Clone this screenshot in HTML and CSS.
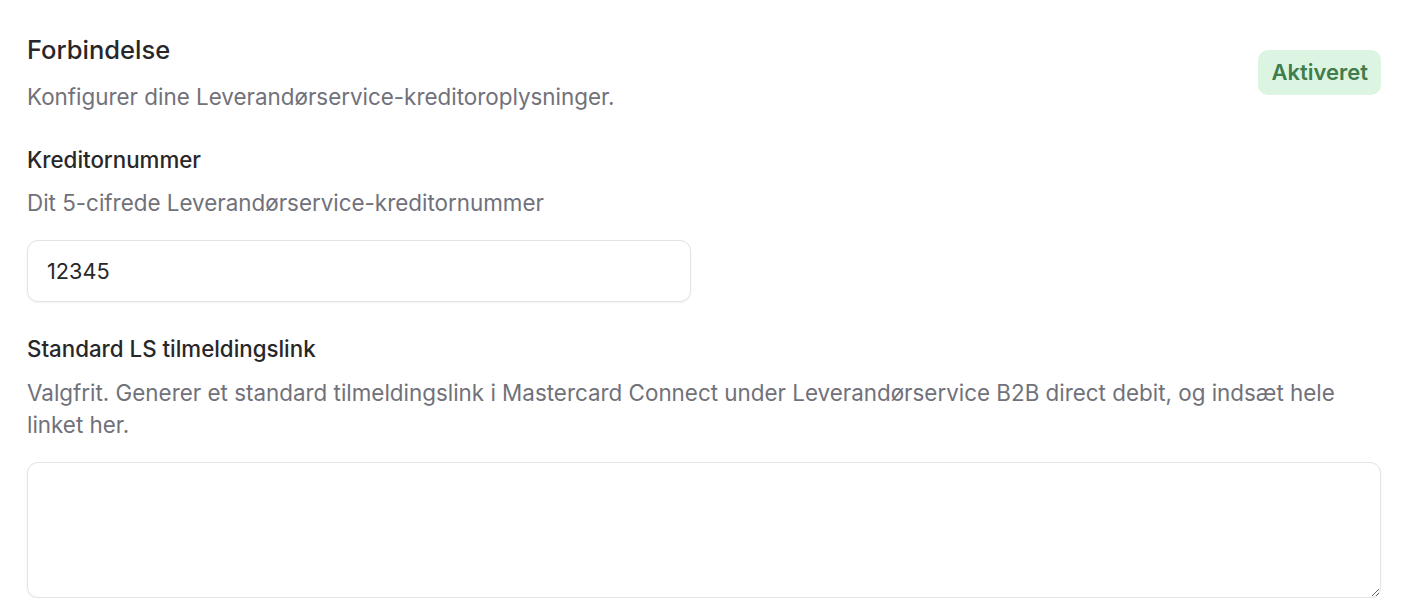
FILE: index.html
```html
<!DOCTYPE html>
<html lang="da">
<head>
<meta charset="utf-8">
<title>Forbindelse</title>
<link rel="stylesheet" href="styles.css">
</head>
<body>
<main class="panel">
  <header class="header">
    <div class="header-text">
      <h2 class="title">Forbindelse</h2>
      <p class="desc">Konfigurer dine Leverandørservice-kreditoroplysninger.</p>
    </div>
    <span class="badge">Aktiveret</span>
  </header>
  <div class="fields">
    <div class="field">
      <label class="label" for="kred">Kreditornummer</label>
      <p class="help">Dit 5-cifrede Leverandørservice-kreditornummer</p>
      <input id="kred" class="input" type="text" value="12345">
    </div>
    <div class="field">
      <label class="label" for="link">Standard LS tilmeldingslink</label>
      <p class="help">Valgfrit. Generer et standard tilmeldingslink i Mastercard Connect under Leverandørservice B2B direct debit, og indsæt hele linket her.</p>
      <textarea id="link" class="textarea"></textarea>
    </div>
  </div>
</main>
</body>
</html>
```
FILE: styles.css
```css
* { box-sizing: border-box; }
html, body { margin: 0; background: #ffffff; }
body {
  font-family: Inter, "Noto Sans", "Liberation Sans", sans-serif;
  color: #27272a;
}
.panel {
  padding: 32px 23px 0 27px;
}
.header {
  display: flex;
  justify-content: space-between;
  align-items: center;
  margin-bottom: 31px;
}
.header-text {
  display: flex;
  flex-direction: column;
  gap: 14px;
}
.title {
  margin: 0;
  font-size: 25.5px;
  line-height: 35px;
  font-weight: 500;
  color: #27272a;
}
.desc {
  margin: 0;
  font-size: 22.4px;
  line-height: 32.5px;
  color: #71717a;
}
.badge {
  display: inline-block;
  padding: 0 13px;
  height: 45px;
  line-height: 45px;
  border-radius: 10px;
  background: #dcf5e3;
  color: #3f7d4c;
  font-size: 22px;
  font-weight: 600;
}
.fields {
  display: flex;
  flex-direction: column;
  gap: 32px;
}
.field {
  display: flex;
  flex-direction: column;
}
.label {
  font-size: 22.3px;
  line-height: 30px;
  font-weight: 500;
  color: #27272a;
  margin-bottom: 12.75px;
}
.help {
  margin: 0 0 20px;
  font-size: 22.4px;
  line-height: 32.5px;
  color: #71717a;
}
.input,
.textarea {
  font-family: inherit;
  font-size: 21.7px;
  color: #27272a;
  border: 1px solid #e4e4e7;
  border-radius: 11px;
  background: #ffffff;
  box-shadow: 0 1px 2px rgba(0, 0, 0, 0.06);
  outline: none;
}
.input {
  width: 664px;
  height: 62px;
  padding: 0 19px;
}
.textarea {
  width: 100%;
  height: 136px;
  padding: 12px 19px;
  resize: vertical;
}
```
